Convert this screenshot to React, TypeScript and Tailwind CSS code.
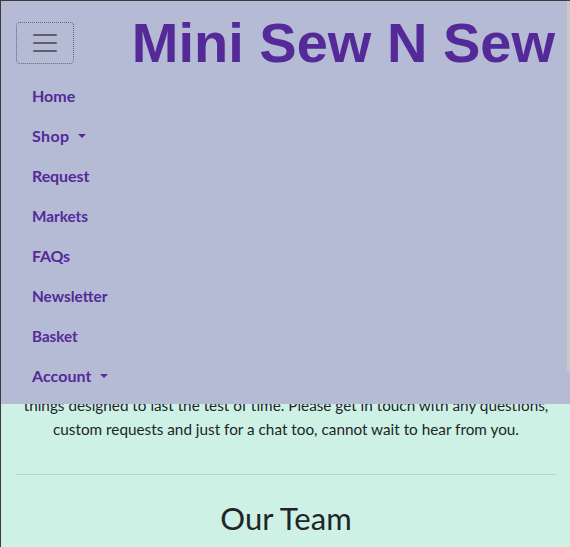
const links = [
  { label: "Home", spacing: "tracking-[0px]" },
  { label: "Shop", spacing: "tracking-[0.35px]", menu: true },
  { label: "Request", spacing: "tracking-[-0.1px]" },
  { label: "Markets", spacing: "text-[15.3px]" },
  { label: "FAQs", spacing: "tracking-[-0.2px]" },
  { label: "Newsletter", spacing: "text-[15.4px]" },
  { label: "Basket", spacing: "text-[15.2px]" },
  { label: "Account", spacing: "tracking-[0.05px]", menu: true },
];

function Header() {
  return (
    <header className="relative z-10 h-[403px] bg-[#b5bad5] text-[#532a98]">
      <div className="flex h-[76px] items-center justify-between pr-[15px] pl-[15px] pt-[7px]">
        <button
          aria-label="Toggle navigation"
          className="flex h-[42px] w-[58px] flex-col items-center justify-center gap-[6px] rounded-[4px] border border-dotted border-[#62636f]"
        >
          <span className="h-[2px] w-6 rounded-[1px] bg-[#5e5f6d]" />
          <span className="h-[2px] w-6 rounded-[1px] bg-[#5e5f6d]" />
          <span className="h-[2px] w-6 rounded-[1px] bg-[#5e5f6d]" />
        </button>
        <a className="font-['Liberation_Sans',sans-serif] text-[56px] leading-[68px] font-bold whitespace-nowrap">
          Mini Sew N Sew
        </a>
      </div>
      <nav className="pl-[31px]">
        {links.map((link) => (
          <a key={link.label} className="flex h-10 items-center pb-[2px] text-[16px] leading-6 font-bold">
            <span className={link.spacing}>{link.label}</span>
            {link.menu && (
              <span className="ml-[9px] border-x-[4px] border-t-[4px] border-x-transparent border-t-[#532a98]" />
            )}
          </a>
        ))}
      </nav>
    </header>
  );
}

export default function App() {
  return (
    <div className="relative h-[547px] w-[570px] overflow-hidden border-t border-l border-[#3d3a40] bg-[#cdf1e4] font-[Lato,sans-serif] text-[#212529]">
      <Header />
      <main className="-mt-[11px] pr-[14px] pl-[15px] text-center">
        <p className="text-[15.3px] leading-6 whitespace-nowrap">
          things designed to last the test of time. Please get in touch with any questions,
          <br />
          custom requests and just for a chat too, cannot wait to hear from you.
        </p>
        <hr className="mt-[33px] border-t border-[#b5d6cc]" />
        <h2 className="mt-[24px] text-[31px] leading-[38px]">Our Team</h2>
      </main>
      <div className="absolute top-0 right-0 z-20 h-[370px] w-[3px] bg-[#c9c9c9]" />
    </div>
  );
}
